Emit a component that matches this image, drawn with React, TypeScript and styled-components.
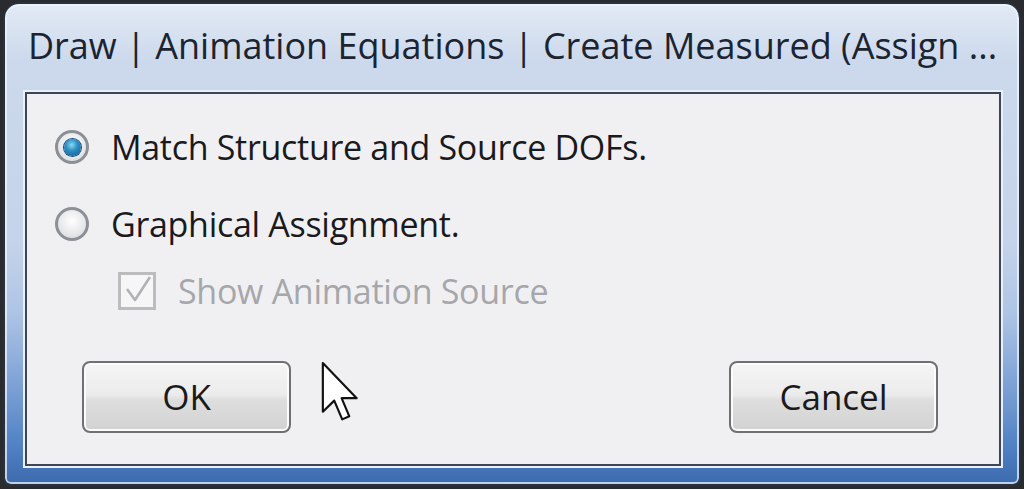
import React from 'react';
import styled, { createGlobalStyle } from 'styled-components';

const GlobalStyle = createGlobalStyle`
  html, body {
    margin: 0;
    padding: 0;
    background: #2a2b2e;
  }
  body {
    width: 1024px;
    height: 489px;
    overflow: hidden;
    font-family: "Open Sans", "Noto Sans", "DejaVu Sans", sans-serif;
  }
`;

const Window = styled.div`
  box-sizing: border-box;
  width: 1018px;
  height: 484px;
  margin: 2px 3px;
  border: 2px solid #28323f;
  border-radius: 16px 16px 8px 8px;
  background: linear-gradient(
    180deg,
    #e2eaf5 0%,
    #ccd9ec 12%,
    #c4d3e9 50%,
    #afc5e5 64%,
    #7ba0d5 80%,
    #4d7fc2 93%,
    #3c6aad 100%
  );
  box-shadow: inset 0 0 0 2px rgba(236, 243, 252, 0.75);
  display: flex;
  flex-direction: column;
  padding: 0 18px 18px 20px;
`;

const TitleBar = styled.div`
  box-sizing: border-box;
  height: 88px;
  display: flex;
  align-items: center;
  padding: 0 0 6px 3px;
  font-size: 36px;
  color: #1b2430;
  white-space: nowrap;
  overflow: hidden;
`;

const Client = styled.div`
  position: relative;
  flex: 1;
  display: flex;
  flex-direction: column;
  padding: 31px 61px 0 28px;
  border: 2px solid #3b4657;
  background: #f0f0f3;
  box-shadow: 0 0 0 2px #e9f0fa;
`;

const OptionRow = styled.label<{ $top?: number; $indent?: number }>`
  height: 44px;
  display: flex;
  align-items: center;
  gap: 22px;
  margin-top: ${({ $top }) => $top ?? 0}px;
  margin-left: ${({ $indent }) => $indent ?? 0}px;
`;

const Radio = styled.span<{ $checked?: boolean }>`
  box-sizing: border-box;
  width: 34px;
  height: 34px;
  flex: none;
  border-radius: 50%;
  border: 3px solid #8c9096;
  background: radial-gradient(circle at 50% 40%, #ffffff 0%, #e6e7e9 60%, #cfd1d4 100%);
  display: flex;
  align-items: center;
  justify-content: center;

  &::after {
    content: '';
    width: 17px;
    height: 17px;
    border-radius: 50%;
    display: ${({ $checked }) => ($checked ? 'block' : 'none')};
    background: radial-gradient(circle at 45% 35%, #8fd6f2 0%, #2d8fc4 40%, #125588 100%);
    box-shadow: 0 0 0 1px #0f4a78;
  }
`;

const CheckBox = styled.span`
  box-sizing: border-box;
  width: 38px;
  height: 38px;
  flex: none;
  border: 3px solid #bcbcbe;
  background: #f6f6f7;
  display: flex;
  align-items: center;
  justify-content: center;
`;

const OptionText = styled.span<{ $disabled?: boolean }>`
  font-size: 34px;
  color: ${({ $disabled }) => ($disabled ? '#a6a7aa' : '#1a1a1c')};
  white-space: nowrap;
  letter-spacing: -0.3px;
`;

const ButtonRow = styled.div`
  margin-top: 48px;
  padding-left: 27px;
  display: flex;
  justify-content: space-between;
`;

const Button = styled.button`
  box-sizing: border-box;
  width: 209px;
  height: 72px;
  border: 2px solid #6f7072;
  border-radius: 8px;
  background: linear-gradient(180deg, #f5f5f5 0%, #ececec 46%, #dedede 54%, #d2d2d2 100%);
  box-shadow: inset 0 0 0 2px #fbfbfb;
  font-family: inherit;
  font-size: 35px;
  color: #1a1a1c;
  padding: 0 0 2px;
`;

const Cursor = styled.svg`
  position: absolute;
  left: 294px;
  top: 267px;
`;

export default function App() {
  return (
    <>
      <GlobalStyle />
      <Window>
        <TitleBar>Draw | Animation Equations | Create Measured (Assign ...</TitleBar>
        <Client>
          <OptionRow>
            <Radio $checked />
            <OptionText>Match Structure and Source DOFs.</OptionText>
          </OptionRow>
          <OptionRow $top={33}>
            <Radio />
            <OptionText>Graphical Assignment.</OptionText>
          </OptionRow>
          <OptionRow $top={23} $indent={63}>
            <CheckBox>
              <svg width="32" height="32" viewBox="0 0 32 32">
                <path
                  d="M6 14 L14 25 L29 2"
                  fill="none"
                  stroke="#b2b2b4"
                  strokeWidth="2.6"
                  strokeLinejoin="round"
                />
              </svg>
            </CheckBox>
            <OptionText $disabled>Show Animation Source</OptionText>
          </OptionRow>
          <ButtonRow>
            <Button>OK</Button>
            <Button>Cancel</Button>
          </ButtonRow>
          <Cursor width="40" height="62" viewBox="0 0 13 20">
            <path
              d="M0.6 0.6 L0.6 16.4 L4.3 12.8 L6.9 18.9 L9.2 17.9 L6.7 12 L11.6 12 Z"
              fill="#ffffff"
              stroke="#111111"
              strokeWidth="0.7"
              strokeLinejoin="round"
            />
          </Cursor>
        </Client>
      </Window>
    </>
  );
}
